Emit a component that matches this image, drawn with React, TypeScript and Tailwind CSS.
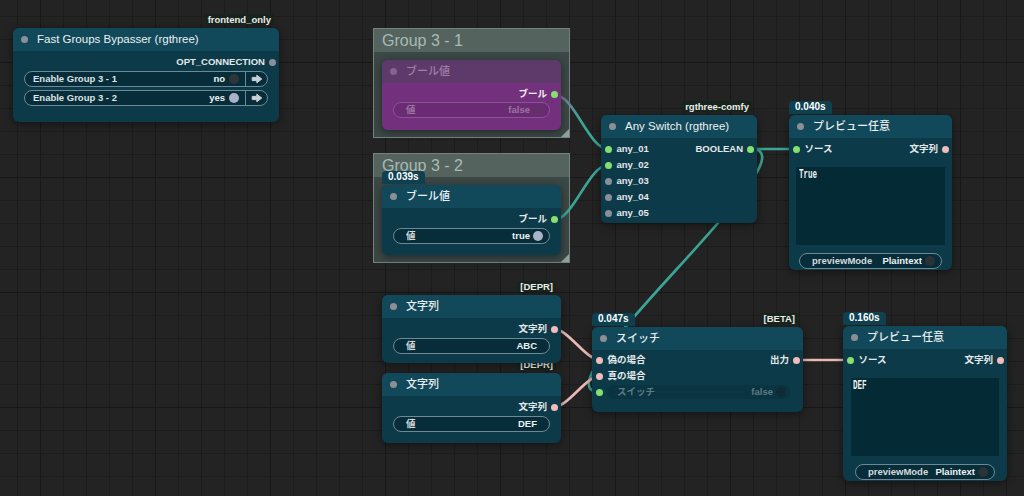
import React from "react";

const GREEN = "bg-[#86e070]";
const GREY = "bg-[#8a9099]";
const PINK = "bg-[#f0bcbc]";

function Dot({ color }: { color: string }) {
  return <span className={`block w-[7px] h-[7px] shrink-0 rounded-full ${color}`} />;
}

function InSlot({ label, color }: { label: string; color: string }) {
  return (
    <div className="flex items-center gap-[4.5px]">
      <Dot color={color} />
      <span className="text-[9.5px] font-bold leading-none text-[#e4e8ea]">{label}</span>
    </div>
  );
}

function OutSlot({ label, color, textCls }: { label: string; color: string; textCls?: string }) {
  return (
    <div className="flex items-center gap-[4px]">
      <span className={`text-[9.5px] font-bold leading-none ${textCls ?? "text-[#e4e8ea]"}`}>{label}</span>
      <Dot color={color} />
    </div>
  );
}

function SlotRow({ left, right }: { left?: React.ReactNode; right?: React.ReactNode }) {
  return (
    <div className="h-[16px] shrink-0 flex items-center justify-between pl-[4px] pr-[3px]">
      {left ?? <span />}
      {right ?? <span />}
    </div>
  );
}

function Pill({
  label,
  value,
  toggle,
}: {
  label: string;
  value: string;
  toggle?: "on" | "off";
}) {
  return (
    <div
      className={`h-[16px] flex items-center rounded-full border border-[#6c8a94] bg-[#062d39] pl-[12px] ${
        toggle ? "pr-[6px]" : "pr-[12px]"
      }`}
    >
      <span className="flex-1 text-[9.5px] font-bold leading-none text-[#d5dbde]">{label}</span>
      <span className="text-[9.5px] font-bold leading-none text-[#eef1f3]">{value}</span>
      {toggle && (
        <span
          className={`ml-[3px] w-[10px] h-[10px] rounded-full ${
            toggle === "on" ? "bg-[#a8b2c8]" : "bg-[#2b3235]"
          }`}
        />
      )}
    </div>
  );
}

function Arrow() {
  return (
    <svg width="12" height="10" viewBox="0 0 12 10">
      <path
        d="M1.2 3.4 H5.8 V1.2 L10.8 5 L5.8 8.8 V6.6 H1.2 Z"
        fill="#c9d0d6"
        stroke="#c9d0d6"
        strokeWidth="1"
        strokeLinejoin="round"
      />
    </svg>
  );
}

function RgRow({ label, value, on }: { label: string; value: string; on: boolean }) {
  return (
    <div className="h-[16px] flex items-center rounded-full border border-[#6c8a94] bg-[#062d39]">
      <div className="flex-1 flex items-center pl-[8px] pr-[6px]">
        <span className="flex-1 text-[9.5px] font-bold leading-none text-[#dde2e5]">{label}</span>
        <span className="text-[9.5px] font-bold leading-none text-[#eef1f3]">{value}</span>
        <span className={`ml-[4px] w-[10px] h-[10px] rounded-full ${on ? "bg-[#a8b2c8]" : "bg-[#2f3538]"}`} />
      </div>
      <span className="w-px self-stretch bg-[#6c8a94]" />
      <div className="w-[21px] flex items-center justify-center">
        <Arrow />
      </div>
    </div>
  );
}

function NodeShell({
  pos,
  title,
  jp,
  tag,
  time,
  purple,
  children,
}: {
  pos: string;
  title: string;
  jp?: boolean;
  tag?: string;
  time?: string;
  purple?: boolean;
  children?: React.ReactNode;
}) {
  return (
    <div
      className={`absolute ${pos} rounded-[6px] flex flex-col shadow-[0_2px_8px_rgba(0,0,0,0.45)] ${
        purple ? "bg-[#72307d]" : "bg-[#0c3a48]"
      }`}
    >
      {time && (
        <div className="absolute left-0 bottom-full mb-[1.5px] h-[13px] px-[6px] rounded-t-[4px] bg-[#0e4050] text-[10px] font-bold leading-none text-white flex items-center">
          {time}
        </div>
      )}
      {tag && (
        <div className="absolute right-[5px] bottom-full mb-[3px] h-[11px] px-[3px] rounded-[2px] bg-[#16241b] text-[9.5px] font-bold leading-none text-[#ececec] flex items-center">
          {tag}
        </div>
      )}
      <div
        className={`h-[23px] shrink-0 rounded-t-[6px] flex items-center pl-[8px] gap-[9px] ${
          purple ? "bg-[#5e3a6a]" : "bg-[#12495a]"
        }`}
      >
        <span className={`block w-[7px] h-[7px] rounded-full ${purple ? "bg-[#86638d]" : "bg-[#8c8f93]"}`} />
        <span
          className={`leading-none ${jp ? "text-[11px] font-medium" : "text-[11.5px]"} ${
            purple ? "text-[#9e7ea5]" : "text-[#eceff1]"
          }`}
        >
          {title}
        </span>
      </div>
      {children}
    </div>
  );
}

function Group({ pos, title }: { pos: string; title: string }) {
  return (
    <div className={`absolute ${pos} w-[197px] h-[110px] border border-[#74827f] bg-[#3c4846] flex flex-col`}>
      <div className="h-[23px] shrink-0 bg-[#55635f] flex items-center pl-[8px] text-[16px] leading-none text-[#a7bab4]">
        {title}
      </div>
      <div className="absolute right-0 bottom-0 w-0 h-0 border-l-[8px] border-l-transparent border-b-[8px] border-b-[#8fa19d]" />
    </div>
  );
}

function Wires() {
  const teal = "#3aa596";
  const pink = "#e9bab4";
  return (
    <svg
      className="absolute inset-0"
      width="1024"
      height="496"
      viewBox="0 0 1024 496"
      fill="none"
      strokeWidth="2.6"
      strokeLinecap="round"
    >
      <defs>
        <linearGradient id="g1" gradientUnits="userSpaceOnUse" x1="555" y1="95" x2="582" y2="118">
          <stop offset="0" stopColor="#8a6c9c" />
          <stop offset="1" stopColor={teal} />
        </linearGradient>
      </defs>
      <path d="M555 95 C574 95 589 149 608 149" stroke="url(#g1)" />
      <path d="M554 220 C573 220 589 165 608 165" stroke={teal} />
      <path d="M751 149 L796 149" stroke={teal} />
      <path d="M751 149 C822 149 529 392 600 392" stroke={teal} />
      <path d="M554 329 C568 329 586 360 600 360" stroke={pink} />
      <path d="M554 407 C568 407 586 376 600 376" stroke={pink} />
      <path d="M797 360 L851 360" stroke={pink} />
    </svg>
  );
}

function TextArea({ text, cls }: { text: string; cls: string }) {
  return (
    <div className={`mt-[10px] h-[78px] bg-[#042a35] flex items-start pt-[2px] text-[12px] leading-none ${cls}`}>
      <span className="inline-block origin-left scale-x-[0.63] font-['Liberation_Mono',monospace] text-[12px] font-bold leading-none text-[#eef1f3]">
        {text}
      </span>
    </div>
  );
}

export default function App() {
  return (
    <div
      className="relative w-[1024px] h-[496px] overflow-hidden font-['Liberation_Sans','Noto_Sans_CJK_JP',sans-serif] bg-[#232323] [background-image:linear-gradient(to_right,#181818_1px,transparent_1px),linear-gradient(to_bottom,#181818_1px,transparent_1px),linear-gradient(to_right,#1c1c1c_1px,transparent_1px),linear-gradient(to_bottom,#1c1c1c_1px,transparent_1px)] [background-size:115px_115px,115px_115px,23px_23px,23px_23px] [background-position:40px_62px,40px_62px,17px_16px,17px_16px]"
    >
      <Group pos="left-[373px] top-[28px]" title="Group 3 - 1" />
      <Group pos="left-[373px] top-[153px]" title="Group 3 - 2" />

      <Wires />

      {/* Fast Groups Bypasser */}
      <NodeShell pos="left-[13px] top-[28px] w-[266px] h-[94px]" title="Fast Groups Bypasser (rgthree)" tag="frontend_only">
        <div className="pt-[3px]">
          <SlotRow right={<OutSlot label="OPT_CONNECTION" color={GREY} />} />
        </div>
        <div className="mt-[1px] px-[11px] flex flex-col gap-[3px]">
          <RgRow label="Enable Group 3 - 1" value="no" on={false} />
          <RgRow label="Enable Group 3 - 2" value="yes" on />
        </div>
      </NodeShell>

      {/* Bypassed boolean in group 3-1 */}
      <NodeShell pos="left-[382px] top-[60px] w-[179px] h-[70px]" title="ブール値" jp purple>
        <div className="pt-[3px]">
          <SlotRow right={<OutSlot label="ブール" color={GREEN} textCls="text-[#f4eef5]" />} />
        </div>
        <div className="px-[11px]">
          <div className="h-[16px] flex items-center rounded-full border border-[#8a5692] bg-[#6a2a74] pl-[12px] pr-[6px]">
            <span className="flex-1 text-[9.5px] font-bold leading-none text-[#9c74a3]">値</span>
            <span className="text-[9.5px] font-bold leading-none text-[#9c74a3]">false</span>
            <span className="ml-[3px] w-[10px] h-[10px] rounded-full bg-[#64306c]" />
          </div>
        </div>
      </NodeShell>

      {/* Boolean in group 3-2 */}
      <NodeShell pos="left-[382px] top-[185px] w-[179px] h-[70px]" title="ブール値" jp time="0.039s">
        <div className="pt-[3px]">
          <SlotRow right={<OutSlot label="ブール" color={GREEN} />} />
        </div>
        <div className="mt-[1px] px-[11px]">
          <Pill label="値" value="true" toggle="on" />
        </div>
      </NodeShell>

      {/* Any Switch */}
      <NodeShell pos="left-[601px] top-[115px] w-[156px] h-[108px]" title="Any Switch (rgthree)" tag="rgthree-comfy">
        <div className="pt-[3px] flex flex-col">
          <SlotRow left={<InSlot label="any_01" color={GREEN} />} right={<OutSlot label="BOOLEAN" color={GREEN} />} />
          <SlotRow left={<InSlot label="any_02" color={GREEN} />} />
          <SlotRow left={<InSlot label="any_03" color={GREY} />} />
          <SlotRow left={<InSlot label="any_04" color={GREY} />} />
          <SlotRow left={<InSlot label="any_05" color={GREY} />} />
        </div>
      </NodeShell>

      {/* Preview 1 */}
      <NodeShell pos="left-[789px] top-[115px] w-[163px] h-[155px]" title="プレビュー任意" jp time="0.040s">
        <div className="pt-[3px]">
          <SlotRow left={<InSlot label="ソース" color={GREEN} />} right={<OutSlot label="文字列" color={PINK} />} />
        </div>
        <TextArea text="True" cls="mx-[7px] px-[3px]" />
        <div className="mt-[8px] px-[10px]">
          <Pill label="previewMode" value="Plaintext" toggle="off" />
        </div>
      </NodeShell>

      {/* String 2 (below) */}
      <NodeShell pos="left-[382px] top-[373px] w-[179px] h-[70px]" title="文字列" jp tag="[DEPR]">
        <div className="pt-[3px]">
          <SlotRow right={<OutSlot label="文字列" color={PINK} />} />
        </div>
        <div className="mt-[1px] px-[11px]">
          <Pill label="値" value="DEF" />
        </div>
      </NodeShell>

      {/* String 1 */}
      <NodeShell pos="left-[382px] top-[295px] w-[179px] h-[68px]" title="文字列" jp tag="[DEPR]">
        <div className="pt-[3px]">
          <SlotRow right={<OutSlot label="文字列" color={PINK} />} />
        </div>
        <div className="mt-[1px] px-[11px]">
          <Pill label="値" value="ABC" />
        </div>
      </NodeShell>

      {/* Switch */}
      <NodeShell pos="left-[592px] top-[327px] w-[211px] h-[85px]" title="スイッチ" jp time="0.047s" tag="[BETA]">
        <div className="pt-[2px] flex flex-col">
          <SlotRow left={<InSlot label="偽の場合" color={PINK} />} right={<OutSlot label="出力" color={PINK} />} />
          <SlotRow left={<InSlot label="真の場合" color={PINK} />} />
          <div className="h-[16px] flex items-center pl-[4px]">
            <Dot color={GREEN} />
            <div className="ml-[4px] mr-[13px] flex-1 h-[14px] rounded-full bg-[#0a3441] flex items-center pl-[10px] pr-[4px]">
              <span className="flex-1 text-[9.5px] font-bold leading-none text-[#5f7a84]">スイッチ</span>
              <span className="text-[9.5px] font-bold leading-none text-[#5f7a84]">false</span>
              <span className="ml-[3px] w-[10px] h-[10px] rounded-full bg-[#0e2c35]" />
            </div>
          </div>
        </div>
      </NodeShell>

      {/* Preview 2 */}
      <NodeShell pos="left-[843px] top-[326px] w-[164px] h-[155px]" title="プレビュー任意" jp time="0.160s">
        <div className="pt-[3px]">
          <SlotRow left={<InSlot label="ソース" color={GREEN} />} right={<OutSlot label="文字列" color={PINK} />} />
        </div>
        <TextArea text="DEF" cls="mx-[8px] px-[2px]" />
        <div className="mt-[8px] px-[12px]">
          <Pill label="previewMode" value="Plaintext" toggle="off" />
        </div>
      </NodeShell>
    </div>
  );
}
